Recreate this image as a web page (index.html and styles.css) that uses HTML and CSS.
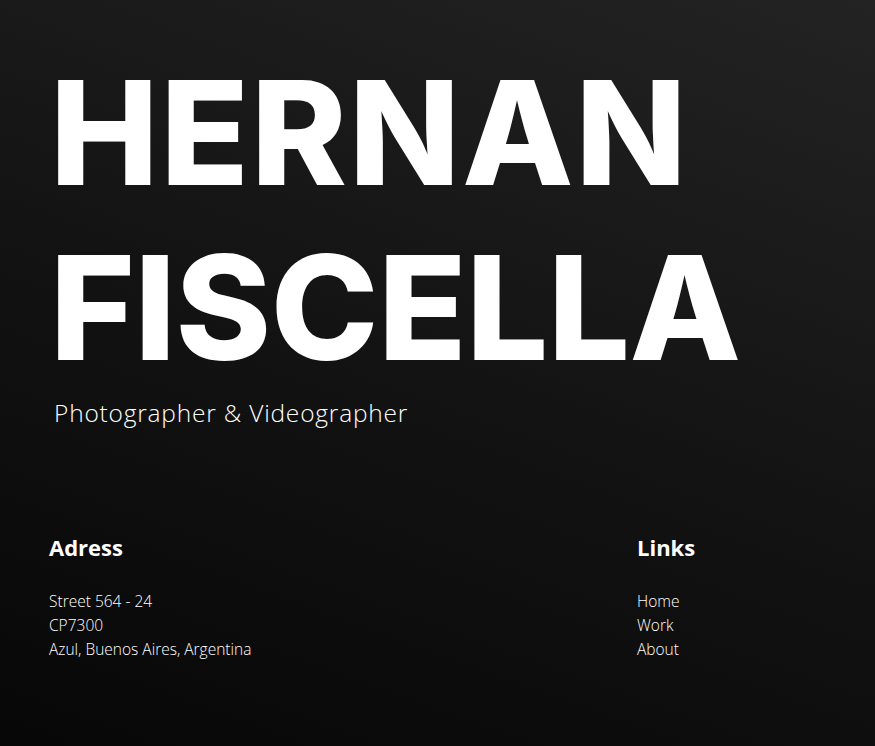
FILE: index.html
```html
<!DOCTYPE html>
<html lang="en">
<head>
<meta charset="utf-8">
<title>Hernan Fiscella</title>
<link rel="stylesheet" href="styles.css">
</head>
<body>
<main class="page">
  <header class="hero">
    <h1 class="title"><span class="line line-first">HERNAN</span><span class="line line-second">FISCELLA</span></h1>
    <p class="subtitle">Photographer &amp; Videographer</p>
  </header>
  <footer class="info">
    <section class="col">
      <h2 class="col-title">Adress</h2>
      <ul class="list">
        <li>Street 564 - 24</li>
        <li>CP7300</li>
        <li>Azul, Buenos Aires, Argentina</li>
      </ul>
    </section>
    <section class="col">
      <h2 class="col-title">Links</h2>
      <ul class="list">
        <li><a href="#">Home</a></li>
        <li><a href="#">Work</a></li>
        <li><a href="#">About</a></li>
      </ul>
    </section>
  </footer>
</main>
</body>
</html>
```

FILE: styles.css
```css
html, body {
  margin: 0;
  padding: 0;
  height: 100%;
}
body {
  background: linear-gradient(200deg, #232323 0%, #131313 50%, #070707 100%);
  color: #ffffff;
  font-family: "Open Sans", "Noto Sans", sans-serif;
}
.page {
  min-height: 746px;
  box-sizing: border-box;
  padding: 45px 0 0 49px;
}
.hero {
  padding-left: 1px;
}
.title {
  margin: 0;
  font-family: "Inter", "Open Sans", sans-serif;
  font-weight: 800;
  font-size: 145px;
  line-height: 175px;
}
.line {
  display: block;
}
.line-first {
  letter-spacing: 2px;
}
.line-second {
  letter-spacing: -0.4px;
}
.subtitle {
  margin: 2px 0 0;
  padding-left: 4px;
  font-weight: 300;
  font-size: 24.5px;
  letter-spacing: 0.8px;
  line-height: 32px;
}
.info {
  margin-top: 103px;
  display: grid;
  grid-template-columns: 588px auto;
}
.col-title {
  margin: 0 0 27px;
  font-size: 22px;
  font-weight: 700;
  line-height: 30px;
}
.list {
  list-style: none;
  margin: 0;
  padding: 0;
  font-size: 15.5px;
  font-weight: 300;
  line-height: 24px;
}
.list a {
  color: #ffffff;
  text-decoration: none;
}
```
